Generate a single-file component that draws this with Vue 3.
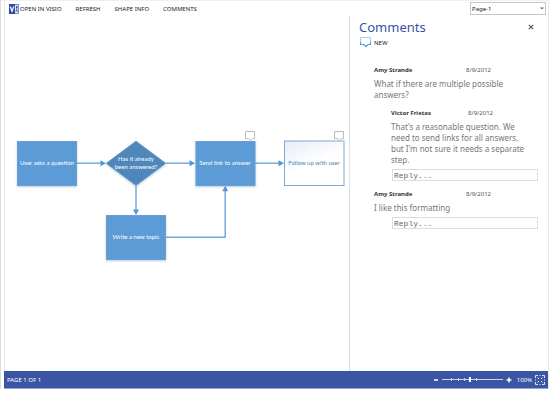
<script setup>
import { ref } from 'vue'

const page = ref('Page-1')
const zoom = ref(46)
const ticks = [16, 26, 36, 57]

const actions = ['REFRESH', 'SHAPE INFO', 'COMMENTS']

const threads = [
  {
    id: 'c1',
    author: 'Amy Strande',
    date: '8/9/2012',
    text: 'What if there are multiple possible answers?',
    replies: [
      {
        id: 'c2',
        author: 'Victor Frietas',
        date: '8/9/2012',
        text: "That's a reasonable question. We need to send links for all answers, but I'm not sure it needs a separate step.",
      },
    ],
  },
  { id: 'c3', author: 'Amy Strande', date: '8/9/2012', text: 'I like this formatting', replies: [] },
]
</script>

<template>
  <div class="app">
    <div class="frame">
      <header class="toolbar">
        <nav class="menu">
          <button type="button" class="tool open">
            <svg class="logo" width="10" height="10" viewBox="0 0 10 10" aria-hidden="true">
              <rect x="5" y="0.5" width="4.5" height="9" fill="#dfe5f5" stroke="#5b72bd" stroke-width="0.8" />
              <rect x="7" y="2" width="1.500" height="2" fill="#3753a8" />
              <path d="M7.700 4v3M6.500 7h2.500" stroke="#3753a8" stroke-width="0.8" />
              <path d="M0 0h6v10H0z" fill="#2b4aa3" />
              <path d="M1.200 2.500L3 7.300L4.800 2.500" fill="none" stroke="#fff" stroke-width="1.200" />
            </svg>
            OPEN IN VISIO
          </button>
          <button v-for="a in actions" :key="a" type="button" class="tool">{{ a }}</button>
        </nav>
        <div class="picker">
          <select v-model="page" aria-label="Page">
            <option>Page-1</option>
          </select>
          <svg class="caret" width="4" height="3" viewBox="0 0 4 3" aria-hidden="true"><path d="M0 0.500h4L2 2.500z" fill="#666" /></svg>
        </div>
      </header>

      <main class="workspace">
        <section class="canvas" aria-label="Drawing">
          <svg class="diagram" width="344" height="260" viewBox="5 16 344 260">
            <defs>
              <linearGradient id="pale" x1="0" y1="0" x2="0.6" y2="1">
                <stop offset="0" stop-color="#e6edf7" />
                <stop offset="0.6" stop-color="#fff" />
              </linearGradient>
              <filter id="shade" x="-10%" y="-10%" width="120%" height="130%">
                <feDropShadow dx="0" dy="1" stdDeviation="0.8" flood-color="#5b86b5" flood-opacity="0.45" />
              </filter>
            </defs>
            <g class="wire">
              <path d="M77 163.200H101" />
              <path d="M166 163.200H190" />
              <path d="M255 163.200H279" />
              <path d="M136 186V210" />
              <path d="M166 237.200H225.200V191" />
            </g>
            <g class="head">
              <path d="M100.500 160.300L106 163.200L100.500 166.200z" />
              <path d="M189.500 160.300L195 163.200L189.500 166.200z" />
              <path d="M278.500 160.300L284 163.200L278.500 166.200z" />
              <path d="M133 209.500L136 215L139 209.500z" />
              <path d="M222.200 191.300L225.200 185.800L228.200 191.300z" />
            </g>
            <g filter="url(#shade)">
              <rect class="box" x="17.500" y="141.500" width="59" height="44" />
              <rect class="box" x="106.500" y="215.500" width="59" height="44" />
              <rect class="box" x="196" y="141.500" width="59" height="44" />
              <path class="diamond" d="M136 141.300L165.500 163.300L136 185.300L106.500 163.300z" />
            </g>
            <rect class="outline" x="284.500" y="141" width="59.500" height="44.500" fill="url(#pale)" />
            <g class="note">
              <path d="M245.500 131.500h9v7h-2l-1.800 2.200l-2-2.200h-3.200z" />
              <path d="M334.500 131.500h9v7h-2l-1.800 2.200l-2-2.200h-3.200z" />
            </g>
            <g class="label">
              <text x="47" y="165">User asks a question</text>
              <text x="136" y="161">Has it already</text>
              <text x="136" y="169">been answered?</text>
              <text x="225" y="165">Send link to answer</text>
              <text x="136" y="239">Write a new topic</text>
              <text class="blue" x="314" y="165">Follow up with user</text>
            </g>
          </svg>
        </section>

        <aside class="pane">
          <div class="pane-head">
            <h1>Comments</h1>
            <button type="button" class="close" aria-label="Close">
              <svg width="6" height="6" viewBox="0 0 6 6"><path d="M0.800 0.800L5.200 5.200M5.200 0.800L0.800 5.200" stroke="#555" stroke-width="1.200" /></svg>
            </button>
          </div>
          <button type="button" class="new">
            <svg width="11" height="11" viewBox="0 0 11 11" aria-hidden="true">
              <path d="M0.500 7.500V0.500H10.500V7.500" fill="none" stroke="#a9cdf0" />
              <path d="M0.500 5V7.500H4L6 9.700L8 7.500H10.500V5" fill="none" stroke="#4d9de3" stroke-width="1.200" />
            </svg>
            NEW
          </button>
          <ul class="threads">
            <li v-for="t in threads" :key="t.id" class="thread">
              <div class="meta"><strong>{{ t.author }}</strong><time>{{ t.date }}</time></div>
              <p>{{ t.text }}</p>
              <div v-for="r in t.replies" :key="r.id" class="reply">
                <div class="meta"><strong>{{ r.author }}</strong><time>{{ r.date }}</time></div>
                <p>{{ r.text }}</p>
              </div>
              <input type="text" placeholder="Reply..." :aria-label="'Reply to ' + t.author" />
            </li>
          </ul>
        </aside>
      </main>

      <footer class="status">
        <span class="count">PAGE 1 OF 1</span>
        <div class="zoom">
          <button type="button" aria-label="Zoom out">
            <svg width="6" height="6" viewBox="0 0 6 6"><path d="M1 3H5" stroke="#fff" stroke-width="1.500" /></svg>
          </button>
          <div class="slider">
            <i v-for="t in ticks" :key="t" class="tick" :style="{ left: t + '%' }"></i>
            <input v-model="zoom" type="range" min="0" max="100" aria-label="Zoom" />
          </div>
          <button type="button" aria-label="Zoom in">
            <svg width="6" height="6" viewBox="0 0 6 6"><path d="M0.500 3H5.500M3 0.500V5.500" stroke="#fff" stroke-width="1.500" /></svg>
          </button>
          <span class="percent">100%</span>
          <button type="button" aria-label="Fit page to window">
            <svg width="10" height="10" viewBox="0 0 10 10">
              <path d="M0.500 3V0.500H3M7 0.500H9.500V3M9.500 7V9.500H7M3 9.500H0.500V7" fill="none" stroke="#dfe5f5" />
              <path d="M4 0.500H6M4 9.500H6M0.500 4V6M9.500 4V6" stroke="#8fa0d2" />
              <path d="M2.500 2.500L4 4M7.500 2.500L6 4M2.500 7.500L4 6M7.500 7.500L6 6" stroke="#fff" stroke-width="0.900" />
            </svg>
          </button>
        </div>
      </footer>
    </div>
  </div>
</template>

<style>
body {
  margin: 0;
  background: #fff;
}
</style>

<style scoped>
.app {
  box-sizing: border-box;
  min-height: 100vh;
  padding: 0 1px 12px 0;
  display: flex;
  font-family: "Noto Sans", "Open Sans", sans-serif;
  font-size: 6px;
  color: #222;
}
.frame {
  flex: 1;
  display: flex;
  flex-direction: column;
  box-sizing: border-box;
  border-left: 1px solid #dcdcdc;
  border-right: 1px solid #e8e8e8;
  border-top: 1px solid #f0f0f0;
  padding-left: 3px;
}
button {
  font: inherit;
  color: inherit;
  background: none;
  border: 0;
  padding: 0;
  display: flex;
  align-items: center;
}
svg {
  display: block;
}
.toolbar {
  display: flex;
  justify-content: space-between;
  align-items: center;
  height: 15px;
  padding: 0 2px 0 4px;
  border-left: 1px solid #e9e9e9;
}
.menu {
  display: flex;
  gap: 14px;
}
.open {
  gap: 1px;
}
.picker {
  position: relative;
}
select {
  appearance: none;
  display: block;
  box-sizing: border-box;
  width: 76px;
  height: 13px;
  padding: 0 1px;
  border: 1px solid #c6c6c6;
  border-radius: 0;
  background: #fff;
  font: inherit;
  color: #222;
}
.caret {
  position: absolute;
  right: 2px;
  top: 5px;
}
.workspace {
  flex: 1;
  display: grid;
  grid-template-columns: 1fr 199px;
}
.canvas {
  border-left: 1px solid #e9e9e9;
  overflow: hidden;
}
.wire path {
  fill: none;
  stroke: #76aade;
  stroke-width: 1.5;
}
.head {
  fill: #5296d8;
}
.box {
  fill: #5b9bd5;
  stroke: #6a9fd0;
}
.diamond {
  fill: #4f87bb;
  stroke: #5c90c2;
}
.outline {
  stroke: #7faad5;
}
.note path {
  fill: #fff;
  stroke: #bababa;
}
.label text {
  text-anchor: middle;
  font-family: Lato, "Noto Sans", sans-serif;
  font-size: 6px;
  fill: #fff;
}
.label .blue {
  fill: #4a86c0;
}
.pane {
  border-left: 1px solid #dedede;
  padding: 3px 9px 0 9px;
}
.pane-head {
  display: flex;
  justify-content: space-between;
  align-items: center;
  height: 16px;
  padding-right: 5px;
}
h1 {
  margin: 0;
  font-size: 13px;
  line-height: 16px;
  font-weight: 400;
  color: #3753a8;
}
.new {
  margin: 2px 0 0 1px;
  gap: 3px;
  height: 11px;
}
.threads {
  list-style: none;
  margin: 0;
  padding: 17px 0 0 15px;
}
.thread {
  margin-bottom: 8px;
}
.meta {
  display: grid;
  grid-template-columns: 92px 1fr;
  line-height: 10px;
  color: #555;
}
.meta strong {
  color: #333;
}
p {
  margin: 3px 0 0;
  font-size: 8px;
  line-height: 11px;
  color: #777;
}
.reply {
  margin-top: 8px;
  padding: 0 10px 0 17px;
}
.reply .meta {
  grid-template-columns: 77px 1fr;
}
.thread input {
  display: block;
  box-sizing: border-box;
  width: calc(100% - 19px);
  height: 12px;
  margin: 4px 0 0 18px;
  padding: 0 1px;
  border: 1px solid #dedede;
  font: 8px "Liberation Mono", monospace;
  color: #666;
}
.thread input::placeholder {
  color: #666;
  opacity: 1;
}
.status {
  display: flex;
  justify-content: space-between;
  align-items: center;
  box-sizing: border-box;
  height: 18px;
  padding: 0 3px;
  background: #3a55a4;
  border-bottom: 1px solid #97a6d2;
  color: #fff;
}
.zoom {
  display: flex;
  align-items: center;
  gap: 3px;
}
.percent {
  padding-left: 2px;
}
.slider {
  position: relative;
  display: flex;
  width: 61px;
}
.tick {
  position: absolute;
  top: 2px;
  width: 1px;
  height: 3px;
  background: #c9d2ec;
}
.slider input {
  appearance: none;
  width: 100%;
  height: 7px;
  margin: 0;
  background: linear-gradient(#d0d8ee, #d0d8ee) center / 100% 1px no-repeat;
}
.slider input::-webkit-slider-thumb {
  appearance: none;
  width: 2px;
  height: 5px;
  background: #fff;
}
</style>
